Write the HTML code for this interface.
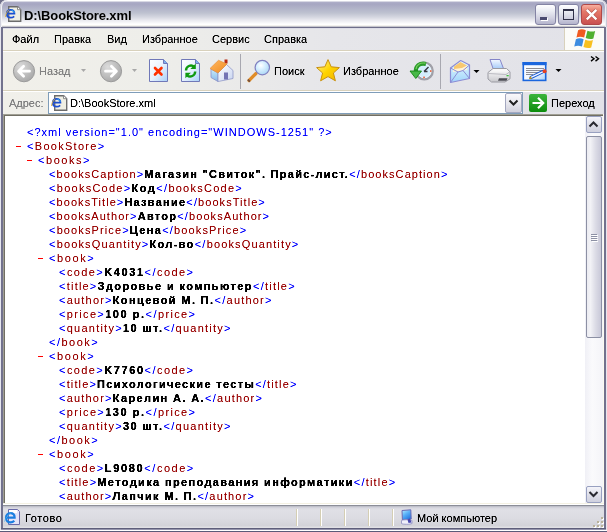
<!DOCTYPE html>
<html><head><meta charset="utf-8">
<style>
*{margin:0;padding:0;box-sizing:border-box}
html,body{width:607px;height:532px;overflow:hidden;background:#e8e8f0}
body{position:relative;font-family:"Liberation Sans",sans-serif}
.a{position:absolute}
svg{position:absolute;overflow:visible}
#corner{left:0;top:0;width:607px;height:14px;background:#70708a}
#title{left:0;top:0;width:607px;height:28px;border-radius:7px 7px 0 0;box-shadow:inset 1px 0 0 #d0d0dc,inset 2px 0 0 #f2f2f6,inset -1px 0 0 #c8c8d4,inset -2px 0 0 #eeeef4,inset 0 1px 0 #ffffff;
 background:linear-gradient(to bottom,#f4f4f8 0px,#f4f4f8 1px,#d8d8e4 1px,#d8d8e4 2px,#aeaec8 2px,#a6a6c2 4px,#b0b2c8 8px,#bec2d0 13px,#d4d6e0 17px,#e8e8ee 20px,#f8f8fa 23px,#ffffff 24px,#ffffff 25px,#f4f2ee 25px,#f4f2ee 26px,#c4c4cc 26px,#c4c4cc 27px,#6e6e8a 27px)}
#ttext{will-change:transform;left:24px;top:8px;font-size:13px;font-weight:bold;color:#000;letter-spacing:-0.1px;white-space:nowrap;line-height:16px}
.tbtn{top:4px;width:21px;height:21px;border-radius:3px;border:1px solid #8484a4;
 background:linear-gradient(to bottom,#ffffff 0%,#eceef4 30%,#d0d0e0 70%,#b4b4cc 100%)}
.tbtn.close{border-color:#b04848;background:linear-gradient(to bottom,#f8b0a0 0%,#e47868 35%,#d8625a 70%,#c85050 100%)}
#frameL{left:0;top:27px;width:3px;height:505px;background:linear-gradient(to right,#e4e4ec 0,#e4e4ec 1px,#7070 90 1px)}
.fl{background:#72728e}
.bg{background:linear-gradient(to right,#f1f0ea 0%,#eeeeea 25%,#e6e6ea 55%,#e2e2e8 100%)}
.tan{background:#d8d1bc}
.wh{background:#ffffff}
.ui{position:absolute;font-size:11px;color:#000;white-space:nowrap;line-height:13px;filter:url(#crispui)}
.gray{color:#828282}
#content{left:5px;top:116px;width:598px;height:387px;background:#fff}
.x{position:absolute;font-size:11px;line-height:14px;white-space:nowrap;font-family:"Liberation Sans",sans-serif}
.m{color:#0000ff;letter-spacing:2px}.t{color:#990000;letter-spacing:1.2px}.tx{font-weight:bold;color:#000;letter-spacing:1.2px}.pi{color:#0000ff;letter-spacing:1px}
.b{color:#ff0000;font-family:"Liberation Mono",monospace;font-weight:bold}
.sb{left:585px;top:116px;width:18px;height:387px;background:linear-gradient(to right,#f0f0f6,#fafafc 40%,#f4f4f8)}
.sbtn{left:586px;width:16px;height:17px;border:1px solid #98a0c0;border-radius:2px;
 background:linear-gradient(to bottom,#f4f4fa 0%,#e0e0ea 50%,#cfd0de 100%)}
.thumb{left:586px;top:136px;width:16px;height:202px;border:1px solid #8c90a4;border-radius:2px;
 background:linear-gradient(to right,#ececf2 0%,#f2f2f6 25%,#dcdce6 60%,#c8c8d8 100%)}
#status{left:3px;top:504px;width:601px;height:24px;background:linear-gradient(to bottom,#ffffff 0,#ffffff 1px,#8c8e98 1px,#8c8e98 2px,#b4b6c0 2px,#cacad4 3px,#d8d8e0 4px,#e0e0e6 6px,#dcdce2 14px,#d2d2d8 22px,#e0e0e4 23px)}
.ssep{top:509px;width:2px;height:17px;background:linear-gradient(to right,#d4ceb4 0,#d4ceb4 1px,#ffffff 1px)}
</style></head><body>
<!-- title -->
<div class="a" id="corner"></div>
<div class="a" id="title"></div>
<svg style="left:5px;top:6px" width="16" height="16" viewBox="0 0 16 16">
 <path d="M3.7 0.7h9l3 3v11.6h-12z" fill="#efefe4" stroke="#6c6c6c" stroke-width="1.4"/>
 <path d="M12.5 0.7v3h3" fill="#fff" stroke="#8a8a8a"/>
 <path d="M1.8 7.6H9.4C9.4 5.2 7.8 3.9 5.6 3.9C3.3 3.9 1.8 5.6 1.8 7.8C1.8 10.2 3.4 11.7 5.6 11.7C7 11.7 8.2 11.2 9.2 10.3" fill="none" stroke="#1c4ed0" stroke-width="1.8"/>
 <path d="M6.5 4.2C8 4.3 9 5.2 9.3 6.6" stroke="#38c8f8" stroke-width="1" fill="none"/>
 <path d="M0.5 11C0.8 8 2 5.5 4 3.8" stroke="#d8b040" stroke-width="0.9" fill="none"/>
</svg>
<div class="a" id="ttext">D:\BookStore.xml</div>
<div class="a tbtn" style="left:535px"></div>
<div class="a" style="left:540px;top:17px;width:7px;height:3px;background:#4a4a70;box-shadow:1px 1px 0 #ffffff"></div>
<div class="a tbtn" style="left:558px"></div>
<div class="a" style="left:563px;top:9px;width:11px;height:11px;border:1px solid #303048;border-top-width:2px"></div>
<div class="a tbtn close" style="left:581px"></div>
<svg style="left:585px;top:8px" width="13" height="13" viewBox="0 0 13 13"><path d="M1.8 1.8l9.6 9.6M11.4 1.8l-9.6 9.6" stroke="#7a2020" stroke-width="3.4" stroke-opacity="0.5"/><path d="M1.8 1.8l9.6 9.6M11.4 1.8l-9.6 9.6" stroke="#fff" stroke-width="2.4"/></svg>
<!-- frame -->
<div class="a" style="left:0;top:27px;width:1px;height:505px;background:#e6e6ee"></div>
<div class="a fl" style="left:1px;top:27px;width:2px;height:503px"></div>
<div class="a fl" style="left:604px;top:27px;width:2px;height:503px"></div>
<div class="a" style="left:606px;top:27px;width:1px;height:505px;background:#e6e6ee"></div>
<div class="a" style="left:1px;top:528px;width:605px;height:1px;background:#5e5e7a"></div><div class="a" style="left:1px;top:529px;width:605px;height:1px;background:#9494ac"></div><div class="a" style="left:0;top:530px;width:607px;height:1px;background:#fff"></div><div class="a" style="left:0;top:531px;width:607px;height:1px;background:#5a5a78"></div>
<!-- menu -->
<div class="a bg" style="left:3px;top:28px;width:601px;height:22px"></div>
<div class="a" style="left:3px;top:28px;width:601px;height:1px;background:#dcdce6"></div>
<div class="a tan" style="left:3px;top:50px;width:601px;height:1px"></div>
<div class="a wh" style="left:3px;top:51px;width:601px;height:1px"></div>
<div class="ui" style="left:12px;top:33px">Файл</div>
<div class="ui" style="left:54px;top:33px">Правка</div>
<div class="ui" style="left:107px;top:33px">Вид</div>
<div class="ui" style="left:142px;top:33px">Избранное</div>
<div class="ui" style="left:212px;top:33px">Сервис</div>
<div class="ui" style="left:264px;top:33px">Справка</div>
<div class="a" style="left:564px;top:28px;width:40px;height:22px;background:#fbfbf8;border-left:1px solid #d8d1bc"></div>
<!-- toolbar -->
<div class="a bg" style="left:3px;top:52px;width:601px;height:38px"></div>
<div class="a tan" style="left:3px;top:90px;width:601px;height:1px"></div>
<div class="a wh" style="left:3px;top:91px;width:601px;height:1px"></div>
<div class="ui gray" style="left:39px;top:65px">Назад</div>
<div class="ui" style="left:274px;top:65px">Поиск</div>
<div class="ui" style="left:343px;top:65px">Избранное</div>
<!-- address -->
<div class="a bg" style="left:3px;top:92px;width:601px;height:22px"></div>
<div class="ui gray" style="left:9px;top:97px">Адрес:</div>
<div class="a" style="left:48px;top:92px;width:475px;height:22px;background:#fff;border:1px solid #7f9db9"></div>
<div class="ui" style="left:70px;top:97px">D:\BookStore.xml</div>
<div class="ui" style="left:551px;top:97px">Переход</div>
<!-- content -->
<div class="a" style="left:3px;top:114px;width:601px;height:1px;background:#a09f94"></div>
<div class="a" style="left:3px;top:114px;width:1px;height:390px;background:#a09f94"></div>
<div class="a" style="left:4px;top:115px;width:599px;height:1px;background:#716f64"></div>
<div class="a" style="left:4px;top:115px;width:1px;height:388px;background:#716f64"></div>
<div class="a" style="left:603px;top:114px;width:1px;height:390px;background:#fbfbf0"></div>
<div class="a" style="left:3px;top:503px;width:601px;height:1px;background:#f4f1e4"></div>
<div class="a" id="content"></div>
<svg width="0" height="0" style="position:absolute"><filter id="crisp" x="0" y="0" width="100%" height="100%"><feComponentTransfer><feFuncA type="linear" slope="1.8" intercept="-0.15"/></feComponentTransfer></filter><filter id="crispreg" x="0" y="0" width="100%" height="100%"><feComponentTransfer><feFuncA type="linear" slope="1.3" intercept="-0.05"/></feComponentTransfer></filter><filter id="crispbold" x="0" y="0" width="100%" height="100%"><feComponentTransfer><feFuncA type="linear" slope="2.2" intercept="-0.1"/></feComponentTransfer></filter><filter id="crispui" x="-20%" y="-40%" width="140%" height="180%"><feComponentTransfer><feFuncA type="linear" slope="1.5" intercept="-0.1"/></feComponentTransfer></filter></svg>
<div class="a" style="left:16px;top:146px;width:5px;height:1px;background:#ff0000"></div>
<div class="a" style="left:27px;top:160px;width:5px;height:1px;background:#ff0000"></div>
<div class="a" style="left:38px;top:258px;width:5px;height:1px;background:#ff0000"></div>
<div class="a" style="left:38px;top:356px;width:5px;height:1px;background:#ff0000"></div>
<div class="a" style="left:38px;top:454px;width:5px;height:1px;background:#ff0000"></div>
<div class="a" style="left:0;top:0;width:607px;height:532px;filter:url(#crispreg)"><div class="x" style="left:27px;top:125px"><span class="pi" style="letter-spacing:1.018px">&lt;?xml version=&quot;1.0&quot; encoding=&quot;WINDOWS-1251&quot; ?&gt;</span></div>
<div class="x" style="left:27px;top:139px"><span class="m" style="letter-spacing:1.380px">&lt;</span><span class="t" style="letter-spacing:1.280px">BookStore</span><span class="m" style="letter-spacing:1.380px">&gt;</span></div>
<div class="x" style="left:38px;top:153px"><span class="m" style="letter-spacing:1.600px">&lt;</span><span class="t" style="letter-spacing:1.500px">books</span><span class="m" style="letter-spacing:1.600px">&gt;</span></div>
<div class="x" style="left:49px;top:167px"><span class="m" style="letter-spacing:1.163px">&lt;</span><span class="t" style="letter-spacing:1.063px">booksCaption</span><span class="m" style="letter-spacing:1.163px">&gt;</span><span class="tx" style="letter-spacing:1.263px;color:transparent">Магазин &quot;Свиток&quot;. Прайс-лист.</span><span class="m" style="letter-spacing:1.163px">&lt;/</span><span class="t" style="letter-spacing:1.063px">booksCaption</span><span class="m" style="letter-spacing:1.163px">&gt;</span></div>
<div class="x" style="left:49px;top:181px"><span class="m" style="letter-spacing:1.356px">&lt;</span><span class="t" style="letter-spacing:1.256px">booksCode</span><span class="m" style="letter-spacing:1.356px">&gt;</span><span class="tx" style="letter-spacing:1.456px;color:transparent">Код</span><span class="m" style="letter-spacing:1.356px">&lt;/</span><span class="t" style="letter-spacing:1.256px">booksCode</span><span class="m" style="letter-spacing:1.356px">&gt;</span></div>
<div class="x" style="left:49px;top:195px"><span class="m" style="letter-spacing:1.150px">&lt;</span><span class="t" style="letter-spacing:1.050px">booksTitle</span><span class="m" style="letter-spacing:1.150px">&gt;</span><span class="tx" style="letter-spacing:1.250px;color:transparent">Название</span><span class="m" style="letter-spacing:1.150px">&lt;/</span><span class="t" style="letter-spacing:1.050px">booksTitle</span><span class="m" style="letter-spacing:1.150px">&gt;</span></div>
<div class="x" style="left:49px;top:209px"><span class="m" style="letter-spacing:1.165px">&lt;</span><span class="t" style="letter-spacing:1.065px">booksAuthor</span><span class="m" style="letter-spacing:1.165px">&gt;</span><span class="tx" style="letter-spacing:1.265px;color:transparent">Автор</span><span class="m" style="letter-spacing:1.165px">&lt;/</span><span class="t" style="letter-spacing:1.065px">booksAuthor</span><span class="m" style="letter-spacing:1.165px">&gt;</span></div>
<div class="x" style="left:49px;top:223px"><span class="m" style="letter-spacing:1.214px">&lt;</span><span class="t" style="letter-spacing:1.114px">booksPrice</span><span class="m" style="letter-spacing:1.214px">&gt;</span><span class="tx" style="letter-spacing:1.314px;color:transparent">Цена</span><span class="m" style="letter-spacing:1.214px">&lt;/</span><span class="t" style="letter-spacing:1.114px">booksPrice</span><span class="m" style="letter-spacing:1.214px">&gt;</span></div>
<div class="x" style="left:49px;top:237px"><span class="m" style="letter-spacing:1.239px">&lt;</span><span class="t" style="letter-spacing:1.139px">booksQuantity</span><span class="m" style="letter-spacing:1.239px">&gt;</span><span class="tx" style="letter-spacing:1.339px;color:transparent">Кол-во</span><span class="m" style="letter-spacing:1.239px">&lt;/</span><span class="t" style="letter-spacing:1.139px">booksQuantity</span><span class="m" style="letter-spacing:1.239px">&gt;</span></div>
<div class="x" style="left:49px;top:251px"><span class="m" style="letter-spacing:1.680px">&lt;</span><span class="t" style="letter-spacing:1.580px">book</span><span class="m" style="letter-spacing:1.680px">&gt;</span></div>
<div class="x" style="left:59px;top:265px"><span class="m" style="letter-spacing:1.488px">&lt;</span><span class="t" style="letter-spacing:1.388px">code</span><span class="m" style="letter-spacing:1.488px">&gt;</span><span class="tx" style="letter-spacing:1.588px;color:transparent">K4031</span><span class="m" style="letter-spacing:1.488px">&lt;/</span><span class="t" style="letter-spacing:1.388px">code</span><span class="m" style="letter-spacing:1.488px">&gt;</span></div>
<div class="x" style="left:59px;top:279px"><span class="m" style="letter-spacing:1.300px">&lt;</span><span class="t" style="letter-spacing:1.200px">title</span><span class="m" style="letter-spacing:1.300px">&gt;</span><span class="tx" style="letter-spacing:1.400px;color:transparent">Здоровье и компьютер</span><span class="m" style="letter-spacing:1.300px">&lt;/</span><span class="t" style="letter-spacing:1.200px">title</span><span class="m" style="letter-spacing:1.300px">&gt;</span></div>
<div class="x" style="left:59px;top:293px"><span class="m" style="letter-spacing:1.287px">&lt;</span><span class="t" style="letter-spacing:1.187px">author</span><span class="m" style="letter-spacing:1.287px">&gt;</span><span class="tx" style="letter-spacing:1.387px;color:transparent">Концевой М. П.</span><span class="m" style="letter-spacing:1.287px">&lt;/</span><span class="t" style="letter-spacing:1.187px">author</span><span class="m" style="letter-spacing:1.287px">&gt;</span></div>
<div class="x" style="left:59px;top:307px"><span class="m" style="letter-spacing:1.430px">&lt;</span><span class="t" style="letter-spacing:1.330px">price</span><span class="m" style="letter-spacing:1.430px">&gt;</span><span class="tx" style="letter-spacing:1.530px;color:transparent">100 р.</span><span class="m" style="letter-spacing:1.430px">&lt;/</span><span class="t" style="letter-spacing:1.330px">price</span><span class="m" style="letter-spacing:1.430px">&gt;</span></div>
<div class="x" style="left:59px;top:321px"><span class="m" style="letter-spacing:1.331px">&lt;</span><span class="t" style="letter-spacing:1.231px">quantity</span><span class="m" style="letter-spacing:1.331px">&gt;</span><span class="tx" style="letter-spacing:1.431px;color:transparent">10 шт.</span><span class="m" style="letter-spacing:1.331px">&lt;/</span><span class="t" style="letter-spacing:1.231px">quantity</span><span class="m" style="letter-spacing:1.331px">&gt;</span></div>
<div class="x" style="left:49px;top:335px"><span class="m" style="letter-spacing:1.533px">&lt;/</span><span class="t" style="letter-spacing:1.433px">book</span><span class="m" style="letter-spacing:1.533px">&gt;</span></div>
<div class="x" style="left:49px;top:349px"><span class="m" style="letter-spacing:1.680px">&lt;</span><span class="t" style="letter-spacing:1.580px">book</span><span class="m" style="letter-spacing:1.680px">&gt;</span></div>
<div class="x" style="left:59px;top:363px"><span class="m" style="letter-spacing:1.488px">&lt;</span><span class="t" style="letter-spacing:1.388px">code</span><span class="m" style="letter-spacing:1.488px">&gt;</span><span class="tx" style="letter-spacing:1.588px;color:transparent">K7760</span><span class="m" style="letter-spacing:1.488px">&lt;/</span><span class="t" style="letter-spacing:1.388px">code</span><span class="m" style="letter-spacing:1.488px">&gt;</span></div>
<div class="x" style="left:59px;top:377px"><span class="m" style="letter-spacing:1.229px">&lt;</span><span class="t" style="letter-spacing:1.129px">title</span><span class="m" style="letter-spacing:1.229px">&gt;</span><span class="tx" style="letter-spacing:1.329px;color:transparent">Психологические тесты</span><span class="m" style="letter-spacing:1.229px">&lt;/</span><span class="t" style="letter-spacing:1.129px">title</span><span class="m" style="letter-spacing:1.229px">&gt;</span></div>
<div class="x" style="left:59px;top:391px"><span class="m" style="letter-spacing:1.283px">&lt;</span><span class="t" style="letter-spacing:1.183px">author</span><span class="m" style="letter-spacing:1.283px">&gt;</span><span class="tx" style="letter-spacing:1.383px;color:transparent">Карелин А. А.</span><span class="m" style="letter-spacing:1.283px">&lt;/</span><span class="t" style="letter-spacing:1.183px">author</span><span class="m" style="letter-spacing:1.283px">&gt;</span></div>
<div class="x" style="left:59px;top:405px"><span class="m" style="letter-spacing:1.430px">&lt;</span><span class="t" style="letter-spacing:1.330px">price</span><span class="m" style="letter-spacing:1.430px">&gt;</span><span class="tx" style="letter-spacing:1.530px;color:transparent">130 р.</span><span class="m" style="letter-spacing:1.430px">&lt;/</span><span class="t" style="letter-spacing:1.330px">price</span><span class="m" style="letter-spacing:1.430px">&gt;</span></div>
<div class="x" style="left:59px;top:419px"><span class="m" style="letter-spacing:1.331px">&lt;</span><span class="t" style="letter-spacing:1.231px">quantity</span><span class="m" style="letter-spacing:1.331px">&gt;</span><span class="tx" style="letter-spacing:1.431px;color:transparent">30 шт.</span><span class="m" style="letter-spacing:1.331px">&lt;/</span><span class="t" style="letter-spacing:1.231px">quantity</span><span class="m" style="letter-spacing:1.331px">&gt;</span></div>
<div class="x" style="left:49px;top:433px"><span class="m" style="letter-spacing:1.533px">&lt;/</span><span class="t" style="letter-spacing:1.433px">book</span><span class="m" style="letter-spacing:1.533px">&gt;</span></div>
<div class="x" style="left:49px;top:447px"><span class="m" style="letter-spacing:1.680px">&lt;</span><span class="t" style="letter-spacing:1.580px">book</span><span class="m" style="letter-spacing:1.680px">&gt;</span></div>
<div class="x" style="left:59px;top:461px"><span class="m" style="letter-spacing:1.576px">&lt;</span><span class="t" style="letter-spacing:1.476px">code</span><span class="m" style="letter-spacing:1.576px">&gt;</span><span class="tx" style="letter-spacing:1.676px;color:transparent">L9080</span><span class="m" style="letter-spacing:1.576px">&lt;/</span><span class="t" style="letter-spacing:1.476px">code</span><span class="m" style="letter-spacing:1.576px">&gt;</span></div>
<div class="x" style="left:59px;top:475px"><span class="m" style="letter-spacing:1.262px">&lt;</span><span class="t" style="letter-spacing:1.162px">title</span><span class="m" style="letter-spacing:1.262px">&gt;</span><span class="tx" style="letter-spacing:1.362px;color:transparent">Методика преподавания информатики</span><span class="m" style="letter-spacing:1.262px">&lt;/</span><span class="t" style="letter-spacing:1.162px">title</span><span class="m" style="letter-spacing:1.262px">&gt;</span></div>
<div class="x" style="left:59px;top:489px"><span class="m" style="letter-spacing:1.250px">&lt;</span><span class="t" style="letter-spacing:1.150px">author</span><span class="m" style="letter-spacing:1.250px">&gt;</span><span class="tx" style="letter-spacing:1.350px;color:transparent">Лапчик М. П.</span><span class="m" style="letter-spacing:1.250px">&lt;/</span><span class="t" style="letter-spacing:1.150px">author</span><span class="m" style="letter-spacing:1.250px">&gt;</span></div></div>
<div class="a" style="left:0;top:0;width:607px;height:532px;filter:url(#crispbold)"><div class="x" style="left:49px;top:167px"><span class="m" style="letter-spacing:1.163px;color:transparent">&lt;</span><span class="t" style="letter-spacing:1.063px;color:transparent">booksCaption</span><span class="m" style="letter-spacing:1.163px;color:transparent">&gt;</span><span class="tx" style="letter-spacing:1.263px">Магазин &quot;Свиток&quot;. Прайс-лист.</span><span class="m" style="letter-spacing:1.163px;color:transparent">&lt;/</span><span class="t" style="letter-spacing:1.063px;color:transparent">booksCaption</span><span class="m" style="letter-spacing:1.163px;color:transparent">&gt;</span></div>
<div class="x" style="left:49px;top:181px"><span class="m" style="letter-spacing:1.356px;color:transparent">&lt;</span><span class="t" style="letter-spacing:1.256px;color:transparent">booksCode</span><span class="m" style="letter-spacing:1.356px;color:transparent">&gt;</span><span class="tx" style="letter-spacing:1.456px">Код</span><span class="m" style="letter-spacing:1.356px;color:transparent">&lt;/</span><span class="t" style="letter-spacing:1.256px;color:transparent">booksCode</span><span class="m" style="letter-spacing:1.356px;color:transparent">&gt;</span></div>
<div class="x" style="left:49px;top:195px"><span class="m" style="letter-spacing:1.150px;color:transparent">&lt;</span><span class="t" style="letter-spacing:1.050px;color:transparent">booksTitle</span><span class="m" style="letter-spacing:1.150px;color:transparent">&gt;</span><span class="tx" style="letter-spacing:1.250px">Название</span><span class="m" style="letter-spacing:1.150px;color:transparent">&lt;/</span><span class="t" style="letter-spacing:1.050px;color:transparent">booksTitle</span><span class="m" style="letter-spacing:1.150px;color:transparent">&gt;</span></div>
<div class="x" style="left:49px;top:209px"><span class="m" style="letter-spacing:1.165px;color:transparent">&lt;</span><span class="t" style="letter-spacing:1.065px;color:transparent">booksAuthor</span><span class="m" style="letter-spacing:1.165px;color:transparent">&gt;</span><span class="tx" style="letter-spacing:1.265px">Автор</span><span class="m" style="letter-spacing:1.165px;color:transparent">&lt;/</span><span class="t" style="letter-spacing:1.065px;color:transparent">booksAuthor</span><span class="m" style="letter-spacing:1.165px;color:transparent">&gt;</span></div>
<div class="x" style="left:49px;top:223px"><span class="m" style="letter-spacing:1.214px;color:transparent">&lt;</span><span class="t" style="letter-spacing:1.114px;color:transparent">booksPrice</span><span class="m" style="letter-spacing:1.214px;color:transparent">&gt;</span><span class="tx" style="letter-spacing:1.314px">Цена</span><span class="m" style="letter-spacing:1.214px;color:transparent">&lt;/</span><span class="t" style="letter-spacing:1.114px;color:transparent">booksPrice</span><span class="m" style="letter-spacing:1.214px;color:transparent">&gt;</span></div>
<div class="x" style="left:49px;top:237px"><span class="m" style="letter-spacing:1.239px;color:transparent">&lt;</span><span class="t" style="letter-spacing:1.139px;color:transparent">booksQuantity</span><span class="m" style="letter-spacing:1.239px;color:transparent">&gt;</span><span class="tx" style="letter-spacing:1.339px">Кол-во</span><span class="m" style="letter-spacing:1.239px;color:transparent">&lt;/</span><span class="t" style="letter-spacing:1.139px;color:transparent">booksQuantity</span><span class="m" style="letter-spacing:1.239px;color:transparent">&gt;</span></div>
<div class="x" style="left:59px;top:265px"><span class="m" style="letter-spacing:1.488px;color:transparent">&lt;</span><span class="t" style="letter-spacing:1.388px;color:transparent">code</span><span class="m" style="letter-spacing:1.488px;color:transparent">&gt;</span><span class="tx" style="letter-spacing:1.588px">K4031</span><span class="m" style="letter-spacing:1.488px;color:transparent">&lt;/</span><span class="t" style="letter-spacing:1.388px;color:transparent">code</span><span class="m" style="letter-spacing:1.488px;color:transparent">&gt;</span></div>
<div class="x" style="left:59px;top:279px"><span class="m" style="letter-spacing:1.300px;color:transparent">&lt;</span><span class="t" style="letter-spacing:1.200px;color:transparent">title</span><span class="m" style="letter-spacing:1.300px;color:transparent">&gt;</span><span class="tx" style="letter-spacing:1.400px">Здоровье и компьютер</span><span class="m" style="letter-spacing:1.300px;color:transparent">&lt;/</span><span class="t" style="letter-spacing:1.200px;color:transparent">title</span><span class="m" style="letter-spacing:1.300px;color:transparent">&gt;</span></div>
<div class="x" style="left:59px;top:293px"><span class="m" style="letter-spacing:1.287px;color:transparent">&lt;</span><span class="t" style="letter-spacing:1.187px;color:transparent">author</span><span class="m" style="letter-spacing:1.287px;color:transparent">&gt;</span><span class="tx" style="letter-spacing:1.387px">Концевой М. П.</span><span class="m" style="letter-spacing:1.287px;color:transparent">&lt;/</span><span class="t" style="letter-spacing:1.187px;color:transparent">author</span><span class="m" style="letter-spacing:1.287px;color:transparent">&gt;</span></div>
<div class="x" style="left:59px;top:307px"><span class="m" style="letter-spacing:1.430px;color:transparent">&lt;</span><span class="t" style="letter-spacing:1.330px;color:transparent">price</span><span class="m" style="letter-spacing:1.430px;color:transparent">&gt;</span><span class="tx" style="letter-spacing:1.530px">100 р.</span><span class="m" style="letter-spacing:1.430px;color:transparent">&lt;/</span><span class="t" style="letter-spacing:1.330px;color:transparent">price</span><span class="m" style="letter-spacing:1.430px;color:transparent">&gt;</span></div>
<div class="x" style="left:59px;top:321px"><span class="m" style="letter-spacing:1.331px;color:transparent">&lt;</span><span class="t" style="letter-spacing:1.231px;color:transparent">quantity</span><span class="m" style="letter-spacing:1.331px;color:transparent">&gt;</span><span class="tx" style="letter-spacing:1.431px">10 шт.</span><span class="m" style="letter-spacing:1.331px;color:transparent">&lt;/</span><span class="t" style="letter-spacing:1.231px;color:transparent">quantity</span><span class="m" style="letter-spacing:1.331px;color:transparent">&gt;</span></div>
<div class="x" style="left:59px;top:363px"><span class="m" style="letter-spacing:1.488px;color:transparent">&lt;</span><span class="t" style="letter-spacing:1.388px;color:transparent">code</span><span class="m" style="letter-spacing:1.488px;color:transparent">&gt;</span><span class="tx" style="letter-spacing:1.588px">K7760</span><span class="m" style="letter-spacing:1.488px;color:transparent">&lt;/</span><span class="t" style="letter-spacing:1.388px;color:transparent">code</span><span class="m" style="letter-spacing:1.488px;color:transparent">&gt;</span></div>
<div class="x" style="left:59px;top:377px"><span class="m" style="letter-spacing:1.229px;color:transparent">&lt;</span><span class="t" style="letter-spacing:1.129px;color:transparent">title</span><span class="m" style="letter-spacing:1.229px;color:transparent">&gt;</span><span class="tx" style="letter-spacing:1.329px">Психологические тесты</span><span class="m" style="letter-spacing:1.229px;color:transparent">&lt;/</span><span class="t" style="letter-spacing:1.129px;color:transparent">title</span><span class="m" style="letter-spacing:1.229px;color:transparent">&gt;</span></div>
<div class="x" style="left:59px;top:391px"><span class="m" style="letter-spacing:1.283px;color:transparent">&lt;</span><span class="t" style="letter-spacing:1.183px;color:transparent">author</span><span class="m" style="letter-spacing:1.283px;color:transparent">&gt;</span><span class="tx" style="letter-spacing:1.383px">Карелин А. А.</span><span class="m" style="letter-spacing:1.283px;color:transparent">&lt;/</span><span class="t" style="letter-spacing:1.183px;color:transparent">author</span><span class="m" style="letter-spacing:1.283px;color:transparent">&gt;</span></div>
<div class="x" style="left:59px;top:405px"><span class="m" style="letter-spacing:1.430px;color:transparent">&lt;</span><span class="t" style="letter-spacing:1.330px;color:transparent">price</span><span class="m" style="letter-spacing:1.430px;color:transparent">&gt;</span><span class="tx" style="letter-spacing:1.530px">130 р.</span><span class="m" style="letter-spacing:1.430px;color:transparent">&lt;/</span><span class="t" style="letter-spacing:1.330px;color:transparent">price</span><span class="m" style="letter-spacing:1.430px;color:transparent">&gt;</span></div>
<div class="x" style="left:59px;top:419px"><span class="m" style="letter-spacing:1.331px;color:transparent">&lt;</span><span class="t" style="letter-spacing:1.231px;color:transparent">quantity</span><span class="m" style="letter-spacing:1.331px;color:transparent">&gt;</span><span class="tx" style="letter-spacing:1.431px">30 шт.</span><span class="m" style="letter-spacing:1.331px;color:transparent">&lt;/</span><span class="t" style="letter-spacing:1.231px;color:transparent">quantity</span><span class="m" style="letter-spacing:1.331px;color:transparent">&gt;</span></div>
<div class="x" style="left:59px;top:461px"><span class="m" style="letter-spacing:1.576px;color:transparent">&lt;</span><span class="t" style="letter-spacing:1.476px;color:transparent">code</span><span class="m" style="letter-spacing:1.576px;color:transparent">&gt;</span><span class="tx" style="letter-spacing:1.676px">L9080</span><span class="m" style="letter-spacing:1.576px;color:transparent">&lt;/</span><span class="t" style="letter-spacing:1.476px;color:transparent">code</span><span class="m" style="letter-spacing:1.576px;color:transparent">&gt;</span></div>
<div class="x" style="left:59px;top:475px"><span class="m" style="letter-spacing:1.262px;color:transparent">&lt;</span><span class="t" style="letter-spacing:1.162px;color:transparent">title</span><span class="m" style="letter-spacing:1.262px;color:transparent">&gt;</span><span class="tx" style="letter-spacing:1.362px">Методика преподавания информатики</span><span class="m" style="letter-spacing:1.262px;color:transparent">&lt;/</span><span class="t" style="letter-spacing:1.162px;color:transparent">title</span><span class="m" style="letter-spacing:1.262px;color:transparent">&gt;</span></div>
<div class="x" style="left:59px;top:489px"><span class="m" style="letter-spacing:1.250px;color:transparent">&lt;</span><span class="t" style="letter-spacing:1.150px;color:transparent">author</span><span class="m" style="letter-spacing:1.250px;color:transparent">&gt;</span><span class="tx" style="letter-spacing:1.350px">Лапчик М. П.</span><span class="m" style="letter-spacing:1.250px;color:transparent">&lt;/</span><span class="t" style="letter-spacing:1.150px;color:transparent">author</span><span class="m" style="letter-spacing:1.250px;color:transparent">&gt;</span></div></div>
<div class="a sb"></div>
<div class="a sbtn" style="top:116px"></div>
<div class="a thumb"></div>
<div class="a sbtn" style="top:486px"></div>
<!-- status -->
<div class="a" id="status"></div>
<div class="ui" style="left:25px;top:512px;letter-spacing:0.6px">Готово</div>
<div class="ui" style="left:417px;top:512px">Мой компьютер</div>
<div class="a ssep" style="left:296px"></div>
<div class="a ssep" style="left:320px"></div>
<div class="a ssep" style="left:344px"></div>
<div class="a ssep" style="left:368px"></div>
<div class="a ssep" style="left:392px"></div>

<!-- toolbar icons -->
<svg style="left:0;top:0" width="607" height="532" viewBox="0 0 607 532">
 <defs>
  <radialGradient id="gc" cx="0.35" cy="0.3" r="0.8"><stop offset="0" stop-color="#dcdcdc"/><stop offset="1" stop-color="#a4a4a4"/></radialGradient>
  <linearGradient id="gpage" x1="0" y1="0" x2="1" y2="1"><stop offset="0" stop-color="#ffffff"/><stop offset="0.5" stop-color="#e8f2fe"/><stop offset="1" stop-color="#a8d0f8"/></linearGradient>
  <linearGradient id="groof" x1="0" y1="0" x2="1" y2="1"><stop offset="0" stop-color="#ffb860"/><stop offset="1" stop-color="#f08a20"/></linearGradient>
  <linearGradient id="gwall" x1="0" y1="0" x2="0" y2="1"><stop offset="0" stop-color="#c8ecfc"/><stop offset="1" stop-color="#88b8e8"/></linearGradient>
  <linearGradient id="gfront" x1="0" y1="0" x2="1" y2="1"><stop offset="0" stop-color="#ffffff"/><stop offset="1" stop-color="#c8d4f0"/></linearGradient>
  <radialGradient id="glens" cx="0.4" cy="0.35" r="0.7"><stop offset="0" stop-color="#ffffff"/><stop offset="0.4" stop-color="#d8f0ff"/><stop offset="1" stop-color="#a8d4f4"/></radialGradient>
  <linearGradient id="gstar" x1="0" y1="0" x2="1" y2="1"><stop offset="0" stop-color="#fff2a0"/><stop offset="0.5" stop-color="#ffd400"/><stop offset="1" stop-color="#f0b000"/></linearGradient>
  <linearGradient id="genv" x1="0" y1="0" x2="0" y2="1"><stop offset="0" stop-color="#e8fcff"/><stop offset="1" stop-color="#a0d4fc"/></linearGradient>
  <linearGradient id="ggo" x1="0" y1="0" x2="0" y2="1"><stop offset="0" stop-color="#3cb43c"/><stop offset="1" stop-color="#0c8c0c"/></linearGradient>
  <linearGradient id="gedit" x1="0" y1="0" x2="1" y2="1"><stop offset="0" stop-color="#ffffff"/><stop offset="0.6" stop-color="#f0f6ff"/><stop offset="1" stop-color="#a8d0f8"/></linearGradient>
 </defs>
 <!-- back -->
 <circle cx="24" cy="71.2" r="10.6" fill="url(#gc)" stroke="#9a9a9a" stroke-width="1"/>
 <path d="M29.5 71.2H18.8M23.6 66.2L18.6 71.2L23.6 76.2" stroke="#fff" stroke-width="2.8" fill="none" stroke-linecap="round" stroke-linejoin="round"/>
 <path d="M81 69h5l-2.5 3z" fill="#a8a8a8"/>
 <!-- forward -->
 <circle cx="111" cy="71.2" r="10.6" fill="url(#gc)" stroke="#9a9a9a" stroke-width="1"/>
 <path d="M105.5 71.2H116.2M111.4 66.2L116.4 71.2L111.4 76.2" stroke="#fff" stroke-width="2.8" fill="none" stroke-linecap="round" stroke-linejoin="round"/>
 <path d="M132 69h5l-2.5 3z" fill="#a8a8a8"/>
 <!-- stop -->
 <path d="M149.5 59.5h14l4 4v18h-18z" fill="url(#gpage)" stroke="#7078b8"/>
 <path d="M163.5 59.5v4h4" fill="#7cb0f0" stroke="#7078b8"/>
 <path d="M155 68l6.5 6.5M161.5 68L155 74.5" stroke="#ff3000" stroke-width="2.6" stroke-linecap="round"/>
 <!-- refresh -->
 <path d="M181.5 59.5h14l4 4v18h-18z" fill="url(#gpage)" stroke="#7078b8"/>
 <path d="M195.5 59.5v4h4" fill="#7cb0f0" stroke="#7078b8"/>
 <path d="M186 70.5a5 5 0 0 1 8.2-3.8" stroke="#109a10" stroke-width="2.4" fill="none"/>
 <path d="M195.8 63.5v5.5h-5.5z" fill="#109a10"/>
 <path d="M195.2 71.5a5 5 0 0 1 -8.2 3.8" stroke="#109a10" stroke-width="2.4" fill="none"/>
 <path d="M185.4 78.2v-5.5h5.5z" fill="#109a10"/>
 <!-- home -->
 <path d="M211 69L218 73V81.5L211 77.5z" fill="url(#gwall)" stroke="#8a90c8" stroke-width="0.8"/>
 <path d="M218 73L226.5 64.5L233 70.5V78.5L218 81.5z" fill="url(#gfront)" stroke="#9098c8" stroke-width="0.8"/>
 <rect x="224" y="72.5" width="4" height="7" fill="#7474b4"/>
 <rect x="224.5" y="59.5" width="3" height="4" fill="#b82810"/>
 <path d="M210 68.5L218.5 60.3L227 64L218 73z" fill="url(#groof)" stroke="#e88a30" stroke-width="0.6"/>
 <!-- separators -->
 <rect x="240" y="54" width="1" height="35" fill="#a8a8b0"/>
 <rect x="440" y="54" width="1" height="35" fill="#a8a8b0"/>
 <!-- search -->
 <path d="M249 80.5L256 73.5" stroke="#e08c28" stroke-width="3.2" stroke-linecap="round"/>
 <path d="M248.3 81.2l1.2-1.2" stroke="#705040" stroke-width="3"/>
 <circle cx="262.3" cy="67.6" r="7.2" fill="url(#glens)" stroke="#8080c0" stroke-width="1.2"/>
 <!-- star -->
 <path d="M328 59.6L331.2 66.8L339.4 67.6L333.4 73L335.4 80.8L328 76.6L320.6 80.8L322.6 73L316.6 67.6L324.8 66.8z" fill="url(#gstar)" stroke="#c89010" stroke-width="1" stroke-linejoin="round"/>
 <!-- history -->
 <circle cx="424.3" cy="71" r="8.4" fill="#d4eefc" stroke="#a0a0a8" stroke-width="2.4"/>
 <circle cx="424.3" cy="71" r="6.8" fill="none" stroke="#f4faff" stroke-width="0.8"/>
 <path d="M424 71.5L428.5 67M424 71.5H427.5" stroke="#383840" stroke-width="1.4"/>
 <rect x="430" y="70.3" width="1.5" height="1.5" fill="#f05020"/>
 <rect x="423.3" y="76.6" width="1.5" height="1.5" fill="#f05020"/>
 <path d="M426 64C419.5 62.5 415.5 66 415.8 72" stroke="#2a9a2a" stroke-width="4.2" fill="none"/>
 <path d="M425.5 63.2C420 62.2 416.5 65 416 69" stroke="#78d060" stroke-width="1.2" fill="none"/>
 <path d="M410 71L421.5 71L415.8 78.5z" fill="#48b848" stroke="#148414" stroke-width="0.9" stroke-linejoin="round"/>
 <!-- mail -->
 <path d="M450.5 68L460.7 60.5L469.5 65V78.5L450.5 82.5z" fill="url(#genv)" stroke="#8c8cd4" stroke-width="1.2" stroke-linejoin="round"/>
 <path d="M453 68.5L460 62.5L467 66L467 70L453 72z" fill="#fff4d8"/>
 <path d="M454 66.5L460.5 62L467 65.5L462 68L454 69z" fill="#f8c870"/>
 <path d="M450.5 82.5L458 72L450.5 68M469.5 78.5L463 70.5L469.5 65M458 72L463 70.5" stroke="#8c8cd4" stroke-width="1" fill="none"/>
 <path d="M473.5 70h6l-3 3z" fill="#000"/>
 <!-- print -->
 <linearGradient id="gpap" x1="0" y1="0" x2="0" y2="1"><stop offset="0" stop-color="#f4f8ff"/><stop offset="1" stop-color="#a8ccf8"/></linearGradient>
 <linearGradient id="gbody" x1="0" y1="0" x2="0" y2="1"><stop offset="0" stop-color="#fcfcfc"/><stop offset="0.45" stop-color="#e8e8ea"/><stop offset="1" stop-color="#c8c8cc"/></linearGradient>
 <path d="M490 59.5H500L503.5 68.5H493z" fill="url(#gpap)" stroke="#8484c8" stroke-width="1"/>
 <path d="M488 72.5L493 68.5H506.5L510 71.8V78.8L505 82H491.5L488 79z" fill="url(#gbody)" stroke="#9a9aa2" stroke-width="1"/>
 <path d="M488.5 73.5L506 74.5L509.5 72" stroke="#b4b4bc" stroke-width="0.9" fill="none"/>
 <path d="M491 71.5L494 69.5H505L507.5 71.5z" fill="#f8f8f8"/>
 <path d="M499 78.3h8.5l-1 2.4h-8.5z" fill="#4c4c54"/>
 <rect x="506.5" y="75" width="2.2" height="1.3" fill="#40c040"/>
 <!-- edit -->
 <rect x="523.3" y="62.8" width="22.4" height="17.6" fill="url(#gedit)" stroke="#1a66de" stroke-width="1.6"/>
 <rect x="522.5" y="62" width="24" height="3.2" fill="#1a66de"/>
 <path d="M526 68.5H544M526 70.5H543M526 72.5H540M526 74.5H533" stroke="#8c8c94" stroke-width="1"/>
 <path d="M531 77.6L543 71.6" stroke="#1c5cd4" stroke-width="3.4" stroke-linecap="round"/>
 <path d="M531.5 77.2L542.6 71.8" stroke="#f4f8ff" stroke-width="1.3" stroke-linecap="round"/>
 <path d="M528.8 79.2l1.6-3 1.7 2.2z" fill="#c89818"/>
 <circle cx="544.6" cy="71.3" r="2" fill="#e84020"/>
 <path d="M555.5 69h6l-3 3z" fill="#000"/>
 <!-- chevron >> -->
 <path d="M591 56.5l3 2.3-3 2.3M595.5 56.5l3 2.3-3 2.3" stroke="#000" stroke-width="1.4" fill="none"/>
 <!-- windows logo -->
 <g transform="translate(585.8 38.3) scale(1.1 1.06) translate(-584.5 -39.2)">
 <path d="M577.5 31.5c2-1 4.5-1.2 7 0l-1.5 7c-2.5-1.2-5-1-7 0z" fill="#f05a20"/>
 <path d="M586 32c2.5 1 5 1.2 7 0.4l-1.6 7c-2 0.8-4.5 0.6-7-0.4z" fill="#50b030"/>
 <path d="M575.5 40c2-1 4.5-1.2 7 0l-1.5 7c-2.5-1.2-5-1-7 0z" fill="#3c8ce0"/>
 <path d="M584 40.5c2.5 1 5 1.2 7 0.4l-1.6 7c-2 0.8-4.5 0.6-7-0.4z" fill="#f8c020"/>
 </g>
 <!-- address icon dropdown & go -->
 <linearGradient id="gdd" x1="0" y1="0" x2="0" y2="1"><stop offset="0" stop-color="#fafafc"/><stop offset="0.5" stop-color="#e8e8ee"/><stop offset="1" stop-color="#d0d0dc"/></linearGradient><rect x="505.5" y="93.5" width="16" height="19" rx="1.5" fill="url(#gdd)" stroke="#a4a8c0"/>
 <path d="M509.5 100.5l4 4 4-4" stroke="#202020" stroke-width="2" fill="none"/>
 <rect x="529" y="94" width="18" height="18" rx="2" fill="url(#ggo)"/>
 <path d="M532.5 103H543M538 97.8L543.2 103L538 108.2" stroke="#fff" stroke-width="2.2" fill="none"/>
 <!-- scrollbar arrows -->
 <path d="M589.5 126.5l4-4 4 4" stroke="#282830" stroke-width="2" fill="none"/>
 <path d="M589.5 492l4 4 4-4" stroke="#282830" stroke-width="2" fill="none"/>
 <path d="M592 235.5h6M592 237.5h6M592 239.5h6M592 241.5h6" stroke="#ffffff" stroke-width="1"/>
 <path d="M591 234.5h6M591 236.5h6M591 238.5h6M591 240.5h6" stroke="#8c90a4" stroke-width="1"/>
 <!-- status computer -->
 <linearGradient id="gscr" x1="0" y1="0" x2="0.6" y2="1"><stop offset="0" stop-color="#b8f0ff"/><stop offset="0.5" stop-color="#58b0f8"/><stop offset="1" stop-color="#2878e0"/></linearGradient>
 <path d="M402 510.5L410.8 509.8L411.2 519L402.4 520z" fill="url(#gscr)" stroke="#6a6ab4" stroke-width="1"/>
 <path d="M401.5 520.5C403 519.5 410 519.5 412 520.5V523.5C410 524.5 403 524.5 401.5 523.5z" fill="#f0f0fa" stroke="#8a8ac0" stroke-width="0.8"/>
 <path d="M407.5 519.5L410 518.5L411.5 522.5L408.5 523z" fill="#4848b0"/>
 <!-- gripper -->
 <g fill="#ffffff"><rect x="602" y="518" width="2" height="2"/><rect x="598" y="522" width="2" height="2"/><rect x="602" y="522" width="2" height="2"/><rect x="594" y="526" width="2" height="2"/><rect x="598" y="526" width="2" height="2"/><rect x="602" y="526" width="2" height="2"/></g><g fill="#bab29a"><rect x="601" y="517" width="2" height="2"/><rect x="597" y="521" width="2" height="2"/><rect x="601" y="521" width="2" height="2"/><rect x="593" y="525" width="2" height="2"/><rect x="597" y="525" width="2" height="2"/><rect x="601" y="525" width="2" height="2"/></g>
</svg>
<svg style="left:51px;top:95px" width="16" height="16" viewBox="0 0 16 16">
 <path d="M3.7 0.7h9l3 3v11.6h-12z" fill="#efefe4" stroke="#6c6c6c" stroke-width="1.4"/>
 <path d="M12.5 0.7v3h3" fill="#fff" stroke="#8a8a8a"/>
 <path d="M1.8 7.6H9.4C9.4 5.2 7.8 3.9 5.6 3.9C3.3 3.9 1.8 5.6 1.8 7.8C1.8 10.2 3.4 11.7 5.6 11.7C7 11.7 8.2 11.2 9.2 10.3" fill="none" stroke="#1c4ed0" stroke-width="1.8"/>
 <path d="M6.5 4.2C8 4.3 9 5.2 9.3 6.6" stroke="#38c8f8" stroke-width="1" fill="none"/>
 <path d="M0.5 11C0.8 8 2 5.5 4 3.8" stroke="#d8b040" stroke-width="0.9" fill="none"/>
</svg><svg style="left:3px;top:508px" width="18" height="18" viewBox="0 0 18 18">
 <path d="M5.5 1.5h9l2 2v13h-11z" fill="#e4e4f8" stroke="#6a6aa8" stroke-width="1"/>
 <rect x="6" y="2" width="8" height="3" fill="#ffffff"/>
 <path d="M3.2 9.6H11.6C11.6 6.8 9.8 5.2 7.4 5.2C4.8 5.2 3 7.2 3 9.8C3 12.5 4.9 14.4 7.4 14.4C9 14.4 10.3 13.8 11.3 12.8" fill="none" stroke="#1a7ee0" stroke-width="2.2"/>
 <path d="M1.5 13.5C2.5 10 5 6.5 8.5 4.5" stroke="#50b8f0" stroke-width="0.9" fill="none" stroke-dasharray="1.2 0.8"/>
</svg>
</body></html>
